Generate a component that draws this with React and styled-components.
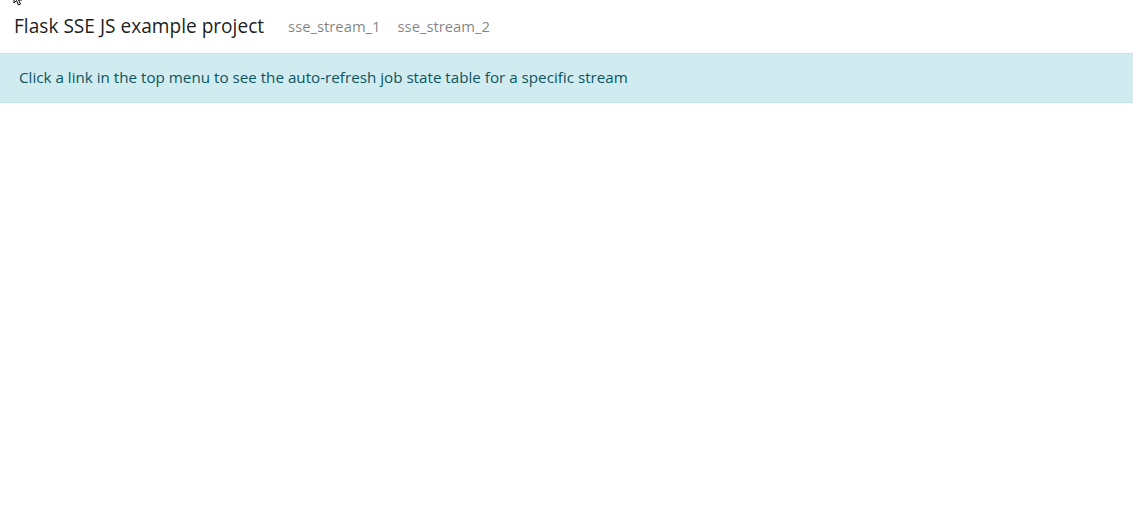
import React from 'react'
import styled, { createGlobalStyle } from 'styled-components'

const GlobalStyle = createGlobalStyle`
body {
    margin: 0;
    background: #fff;
    font-family: "Open Sans", "Noto Sans", sans-serif;
    color: #212529;
}
`
const Page = styled.div`
position: relative;
display: flex;
flex-direction: column;
width: 100%;
`
const Navbar = styled.nav`
display: flex;
align-items: center;
height: 53px;
padding: 0 14px 2px 14px;
box-sizing: border-box;
`
const Brand = styled.a`
font-size: 19.1px;
color: rgba(0, 0, 0, 0.9);
margin-right: 24px;
text-decoration: none;
`
const NavLinks = styled.div`
display: flex;
gap: 17px;
`
const NavLink = styled.a`
font-size: 14.8px;
color: rgba(0, 0, 0, 0.5);
text-decoration: none;
`
const Alert = styled.div`
background: #d1ecf1;
border-top: 1px solid #bee5eb;
border-bottom: 1px solid #bee5eb;
color: #0c5460;
font-size: 15.2px;
height: 50px;
box-sizing: border-box;
display: flex;
align-items: center;
padding: 0 19px 2px 19px;
`
const Cursor = styled.svg`
position: absolute;
left: 13px;
top: -8px;
`

const App = () => {
    return (
        <>
            <GlobalStyle />
            <Page>
                <Cursor width="12" height="15" viewBox="0 0 12 15">
                    <path d="M1 1 L1 11 L3.5 8.5 L5.5 13 L7.5 12 L5.5 8 L9 8 Z" fill="#fff" stroke="#000" strokeWidth="1" />
                </Cursor>
                <Navbar>
                    <Brand href="#">Flask SSE JS example project</Brand>
                    <NavLinks>
                        <NavLink href="#">sse_stream_1</NavLink>
                        <NavLink href="#">sse_stream_2</NavLink>
                    </NavLinks>
                </Navbar>
                <Alert>Click a link in the top menu to see the auto-refresh job state table for a specific stream</Alert>
            </Page>
        </>
    )
}
export default App;
